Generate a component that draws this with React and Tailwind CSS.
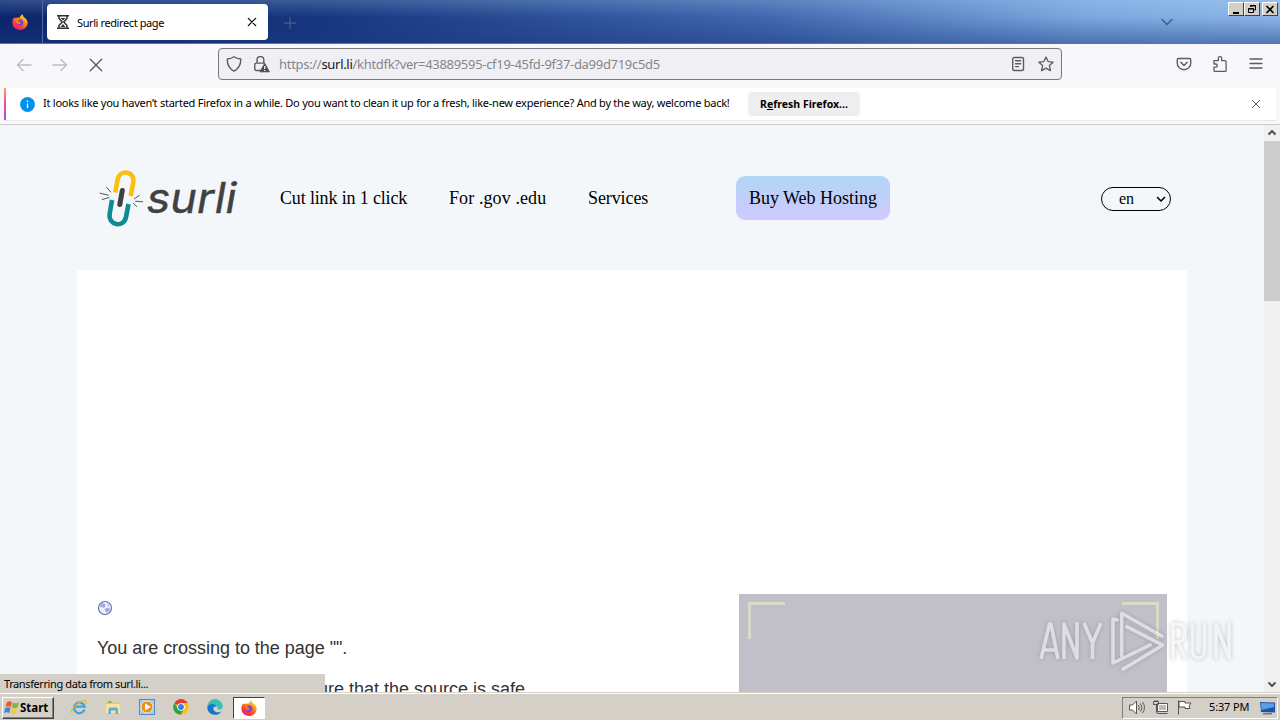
import React from "react";

const ui = "font-['Noto_Sans',sans-serif]";

function Firefox({ size, id }) {
  return (
    <svg width={size} height={size} viewBox="0 0 16 16">
      <defs>
        <linearGradient id={id} x1="0.85" y1="0" x2="0.2" y2="1">
          <stop offset="0" stopColor="#fff04a" />
          <stop offset="0.35" stopColor="#ff980e" />
          <stop offset="0.7" stopColor="#ff3b3f" />
          <stop offset="1" stopColor="#e31587" />
        </linearGradient>
      </defs>
      <path d="M10 .3c1 .8 1.4 1.7 1.5 2.6 2.2 1 4 2.800 4.100 5.800C15.600 12.900 12.300 15.900 8 15.900S.4 12.600.4 8.500c0-2 .7-4 1.800-5.200l.5 1.300c.6-.7 1-1.100 1.700-1.400l.3 1c1-.7 1.900-.7 2.900-.4C8 2.500 9.200 1.800 10 .3z" fill={`url(#${id})`} />
      <circle cx="8" cy="8.600" r="3.400" fill="#7542e5" />
      <path d="M4 5.500c1.500-.6 2.800-.1 4 .7-1.600.1-2.200.8-1.600 1.500.7.6 2 .4 2.600 1.100-1 1.700-3 1.800-4.300.2C3.900 8 3.600 6.700 4 5.500z" fill="#ff7a24" />
    </svg>
  );
}

function Stroke({ size = 16, w = 1.2, className = "", children, box = 16 }) {
  return (
    <svg width={size} height={size} viewBox={`0 0 ${box} ${box}`} fill="none" stroke="currentColor" strokeWidth={w} strokeLinecap="round" strokeLinejoin="round" className={className}>
      {children}
    </svg>
  );
}

function TitleBar() {
  return (
    <div className="relative flex h-[44px] shrink-0 border-b border-[#716f7e] bg-[linear-gradient(to_right,#0a246a,#16367e_25%,#4168ae_60%,#7ba7df_85%,#8ab5e6)]">
      <div className="absolute inset-0 bg-[linear-gradient(to_bottom,rgba(190,225,255,0.22),rgba(70,110,190,0)_40%,rgba(30,55,130,0.48))]" />
      <div className="relative flex w-[43px] items-center justify-center border-r border-[#52689e] pr-0.5">
        <Firefox size={16} id="ffTop" />
      </div>
      <div className="relative ml-1 mt-1 flex h-9 w-[221px] items-center rounded bg-white pl-2 pr-[10px] text-black">
        <svg width="16" height="16" viewBox="0 0 16 16" fill="none" stroke="#333" strokeWidth="1.500">
          <path d="M2 1.800h12M2 14.200h12M4 2v2.500L7.200 8 4 11.500V14M12 2v2.500L8.800 8l3.200 3.500V14" />
          <path d="M5.500 4h5L8 6.500zM5.500 13l2.500-3 2.500 3z" fill="#333" stroke="none" />
        </svg>
        <span className={`${ui} ml-[6px] flex-1 whitespace-nowrap pt-[2px] text-[11px] tracking-[-0.4px]`}>Surli redirect page</span>
        <Stroke size={12} box={12} w={1.200}><path d="M2.300 2.300l7.400 7.400M9.700 2.300L2.300 9.700" /></Stroke>
      </div>
      <Stroke size={12} box={12} w={1} className="relative ml-4 mt-[17px] text-[#53678a]"><path d="M6 .5v11M.5 6h11" /></Stroke>
      <Stroke size={14} box={14} w={1.500} className="relative ml-auto mr-[4px] mt-[15px] text-[#3d5f91]"><path d="M2 4.500l5 5 5-5" /></Stroke>
      <div className="relative ml-[50px] mr-[2px] flex pt-[2px]">
        {["min", "max", "close"].map((k) => (
          <div key={k} className={`flex h-[14px] w-4 items-center justify-center border border-b-[#404040] border-l-white border-r-[#404040] border-t-white bg-[#d4d0c8] ${k === "close" ? "ml-[2px]" : ""}`}>
            <svg width="12" height="11" viewBox="0 0 12 11" fill="none" stroke="#000">
              {k === "min" && <path d="M3 9h6" strokeWidth="2" />}
              {k === "max" && <path d="M4.500 3V1.500h5V6H8M4 2h6M2.500 4.500h5v4h-5zM2 5h6" />}
              {k === "close" && <path d="M2.500 2l7 7M9.500 2l-7 7" strokeWidth="1.700" />}
            </svg>
          </div>
        ))}
      </div>
    </div>
  );
}

function NavBar() {
  return (
    <div className="flex h-[44px] shrink-0 items-start bg-[#f8f8fb] text-[#5b5b66]">
      <div className="flex w-[218px] gap-5 pl-4 pt-[13px]">
        <Stroke className="text-[#bcbcc2]" w={1.400}><path d="M15 8H1.500M7 2.500L1.500 8 7 13.500" /></Stroke>
        <Stroke className="text-[#bcbcc2]" w={1.400}><path d="M1 8h13.500M9 2.500L14.500 8 9 13.500" /></Stroke>
        <Stroke w={1.400}><path d="M2.300 2.300l11.400 11.400M13.700 2.300L2.300 13.700" /></Stroke>
      </div>
      <div className="mt-1 flex h-8 w-[844px] items-center rounded border border-[#76767f] bg-[#f0f0f4] pl-[7px] pr-[7px]">
        <Stroke w={1.400}><path d="M8 .8c2 1.500 4.300 2 6.700 2.200.3 4.800-1.700 9.500-6.700 12.200C3 12.500 1 7.800 1.300 3 3.700 2.800 6 2.300 8 .8z" /></Stroke>
        <svg width="17" height="17" viewBox="0 0 17 17" className="ml-[11px]" fill="none" stroke="#5b5b66" strokeWidth="1.400">
          <path d="M4 7V4a3.300 3.300 0 0 1 6.800 0v3M7.500 14.500H3.300a1.500 1.500 0 0 1-1.500-1.500V8.600A1.500 1.500 0 0 1 3.300 7.100h8.200" strokeLinecap="round" />
          <path d="M11.700 7.500l4.600 8.300H7z" fill="#4b4b55" stroke="#4b4b55" strokeWidth="1" strokeLinejoin="round" />
          <path d="M11.700 10v3M11.700 14v1.100" stroke="#fff" strokeWidth="1.200" />
        </svg>
        <span className={`${ui} ml-[9px] flex-1 whitespace-nowrap pt-[2px] text-[13px] tracking-[-0.3px] text-[#85858d]`}>
          https://<span className="text-[#15141a]">surl.li</span>/khtdfk?ver=43889595-cf19-45fd-9f37-da99d719c5d5
        </span>
        <Stroke w={1.400}><rect x="2.700" y="1.500" width="10.800" height="13" rx="1.500" /><path d="M5.500 4.800h5.200M5.500 7.700h5.200M5.500 10.600h3" /></Stroke>
        <Stroke w={1.300} className="ml-3"><path d="M8 1l2.100 4.600 5 .6-3.700 3.400 1 5L8 12.100l-4.400 2.500 1-5L.9 6.200l5-.6z" /></Stroke>
      </div>
      <div className="flex flex-1 items-center justify-end gap-5 pr-4 pt-3">
        <Stroke w={1.400}><path d="M2.500 2.500h11a1.200 1.200 0 0 1 1.200 1.200v3.500a6.700 6.500 0 0 1-13.400 0V3.700a1.200 1.200 0 0 1 1.200-1.200zM4.800 6.300L8 9.400l3.200-3.100" /></Stroke>
        <Stroke w={1.300}><path d="M2 6.500V4.700h4.300V2.400a1.700 1.700 0 0 1 3.400 0v2.300h3.100a1.300 1.300 0 0 1 1.300 1.300v8.200a1.300 1.300 0 0 1-1.300 1.300H3.200A1.300 1.300 0 0 1 2 14.200v-3h1.700a1.600 1.600 0 0 0 0-3.200H2z" /></Stroke>
        <Stroke w={1.300}><path d="M2 3h12M2 7.500h12M2 12h12" /></Stroke>
      </div>
    </div>
  );
}

function Notification() {
  return (
    <div className="h-[37px] shrink-0 border-b border-[#cccccf] bg-[#f8f8fb] pl-1 pr-1">
      <div className="flex h-[33px] items-center border-b border-[#e7e7ea] bg-white pr-[14px]">
        <div className="h-8 w-[2px] bg-[linear-gradient(#ff9a5a,#f04fa5_45%,#9059d8)]" />
        <svg width="15" height="15" viewBox="0 0 15 15" className="ml-[14px]">
          <circle cx="7.500" cy="7.500" r="7.400" fill="#0090ed" />
          <path d="M7.500 6.500V11M7.500 3.500V5" stroke="#fff" strokeWidth="1.300" />
        </svg>
        <span className={`${ui} ml-2 w-[705px] whitespace-nowrap pb-[1px] text-[11px] tracking-[-0.25px] text-black`}>
          It looks like you haven’t started Firefox in a while. Do you want to clean it up for a fresh, like-new experience? And by the way, welcome back!
        </span>
        <div className={`${ui} flex h-6 w-28 shrink-0 items-center justify-center whitespace-nowrap rounded bg-[#eeeeef] pt-[1px] text-[10.500px] font-bold text-black`}>
          <span>R<span className="underline">e</span>fresh Firefox...</span>
        </div>
        <Stroke size={12} box={12} w={1} className="ml-auto text-[#5b5b66]"><path d="M2.300 2.300l7.400 7.400M9.700 2.300L2.300 9.700" /></Stroke>
      </div>
    </div>
  );
}

function Logo() {
  return (
    <svg width="140" height="60" viewBox="0 0 140 60" fill="none" strokeLinecap="round">
      <path d="M16.300 24.500l2.200-12.500c2-11.500 17.500-9 15.800 2l-2.600 14" stroke="#fcbf10" strokeWidth="4.600" strokeLinecap="butt" />
      <path d="M13 32l-2.300 13.500c-1.700 12.500 14.300 14.500 16.300 3.500l2.500-13" stroke="#0d8b94" strokeWidth="4.600" strokeLinecap="butt" />
      <path d="M23.300 22.500l-2.500 14" stroke="#414042" strokeWidth="5" />
      <path d="M7.700 19.500l4 4.500M1 25.200l8.300 2M3.300 31.500l6.700-2M35.300 30.800l5-3.300M36.700 33.200l7 .6M34.300 35.200l3.400 3.300" stroke="#414042" strokeWidth="0.900" />
      <text x="47.500" y="45" textLength="90" lengthAdjust="spacingAndGlyphs" fontFamily="Inter, sans-serif" fontSize="42" fontStyle="italic" fill="#414042" stroke="#414042" strokeWidth="0.400">surli</text>
    </svg>
  );
}

function Watermark() {
  return (
    <div className="absolute left-[1039px] top-[604px] opacity-60 drop-shadow-[0_0_2px_rgba(70,70,80,0.500)]">
      <svg width="200" height="74" viewBox="0 0 200 74" fill="none" stroke="#f2f2f4" strokeWidth="3.600" strokeLinejoin="round">
        <path d="M2 55L10.500 20h1.500l7 35M5 46h12M25 55V20l13 34V18M45 19l8.500 20L62 19M53.500 38v17" />
        <path d="M78 16l-4-1v44l37-18M82.700 52V9.300L122.700 32M87.700 22.700l36 18.500L84.300 65" strokeLinecap="round" />
        <path d="M134 55V20h5q7 0 7 9t-7 9h-5M139 38l7.500 17M153.500 19v27q0 8 6 8t6-8V19M177 55V20l13 34V18" />
      </svg>
    </div>
  );
}

function Page() {
  return (
    <div className="flex min-h-0 flex-1 bg-[#f3f7fa]">
      <div className="min-w-0 flex-1 overflow-hidden px-[77px]">
        <header className="flex h-[145px] items-center font-['Liberation_Serif',serif] text-[18px] text-black">
          <div className="ml-[22px] w-[181px]"><Logo /></div>
          <nav className="flex w-[456px] whitespace-nowrap pt-[2px]">
            <span className="w-[169px] tracking-[-0.15px]">Cut link in 1 click</span>
            <span className="w-[139px] tracking-[0.1px]">For .gov .edu</span>
            <span className="tracking-[-0.1px]">Services</span>
          </nav>
          <div className="flex h-[44px] w-[154px] items-center justify-center whitespace-nowrap rounded-[9px] bg-[linear-gradient(#b0d6f5,#d0c8ff)] pt-[1px] text-[18px]">Buy Web Hosting</div>
          <div className="ml-auto mr-4 mt-[3px] flex h-6 w-[70px] items-center justify-between rounded-full border border-black pl-[17px] pr-[4px] text-[16px]">
            en
            <Stroke size={10} box={10} w={1.600}><path d="M1.500 3.500L5 7l3.500-3.500" /></Stroke>
          </div>
        </header>
        <main className="flex h-[422px] w-[1110px] justify-between overflow-hidden bg-white pl-5 pr-5 font-['Liberation_Sans',sans-serif] text-[18px] leading-[20px] text-[#333]">
          <div className="w-[500px] whitespace-nowrap pt-[330px]">
            <svg width="16" height="16" viewBox="0 0 16 16">
              <circle cx="8" cy="8" r="6.500" fill="#eef2ff" stroke="#646ca5" strokeWidth="1.100" />
              <path d="M3 4.500L6 3l2.500 1.500L8 7 6.500 8 5 7 3.500 7.500zM7.500 9l3-1.500 2.500 1-.5 2.500-3 2-1-2zM10 3.500l2.500 1.500-1 1.500z" fill="#a3aed8" />
            </svg>
            <p className="mt-[22px] tracking-[-0.03px]">You are crossing to the page "".</p>
            <p className="mt-[21px] pl-[221px]">ure that the source is safe</p>
          </div>
          <div className="mt-[324px] flex w-[428px] justify-between bg-[#c1bfc8] pl-[9px] pr-2 pt-2">
            <div className="h-[37px] w-[37px] border-l-[3px] border-t-[3px] border-[#dadbc9]" />
            <div className="h-[37px] w-[37px] border-r-[3px] border-t-[3px] border-[#dadbc9]" />
          </div>
        </main>
      </div>
      <div className="flex w-4 flex-col items-center bg-[#f0f0f0] text-[#505050]">
        <Stroke size={16} w={2} className="shrink-0"><path d="M4.500 9.500L8 6l3.500 3.500" strokeLinecap="butt" /></Stroke>
        <div className="h-[160px] w-4 bg-[#cdcdcd]" />
        <Stroke size={16} w={2} className="mt-auto"><path d="M4.500 6.500L8 10l3.500-3.500" strokeLinecap="butt" /></Stroke>
      </div>
    </div>
  );
}

function Taskbar() {
  return (
    <div className={`${ui} flex h-7 shrink-0 items-center border-t border-[#d4d0c8] bg-[#d4d0c8] text-[11px] text-black shadow-[inset_0_1px_0_#fff]`}>
      <div className="ml-[2px] mt-[2px] flex h-[22px] w-[52px] items-center border border-b-[#404040] border-l-white border-r-[#404040] border-t-white pl-[1px] shadow-[inset_-1px_-1px_0_#808080]">
        <svg width="16" height="16" viewBox="0 0 16 16">
          <path d="M3 2q3-1.500 5 0L7 7Q4.500 5.500 1.500 7z" fill="#f1592a" />
          <path d="M9 2.500q3 1.500 6 0L13.500 7.500q-3 1.500-5.500 0z" fill="#7cb841" />
          <path d="M1.300 8q3-1.500 5.300 0l-1.300 5Q3 11.500 0 13z" fill="#3d87d6" />
          <path d="M7.800 8.500q3 1.500 5.500 0L12 13.500q-3 1.500-5.500 0z" fill="#fbc534" />
        </svg>
        <span className="text-[11.500px] font-bold">Start</span>
      </div>
      <div className="ml-[17px] mt-[1px] flex items-center gap-[18px]">
        <svg width="16" height="16" viewBox="0 0 16 16" fill="none">
          <path d="M13.500 10.500A5.300 5.300 0 1 1 13.600 7.600H4" stroke="#38a8e5" strokeWidth="2.400" />
          <path d="M1 14C-2 10 12-1 15 2c.5.600.4 1.500 0 2.500" stroke="#e6b832" strokeWidth="1.200" />
        </svg>
        <svg width="16" height="16" viewBox="0 0 16 16">
          <path d="M1 2h5l1.500 1.500H14V13H1z" fill="#eac85e" />
          <path d="M1 5h14v9H1z" fill="#f7e498" />
          <path d="M3.500 15v-4.500q0-2 2-2h5.500q2 0 2 2V15h-2.500v-3.500H6V15z" fill="#5aaee0" />
          <path d="M3.500 2h3v2h-3z" fill="#79b84c" />
        </svg>
        <svg width="16" height="16" viewBox="0 0 16 16">
          <rect x=".5" y=".5" width="15" height="15" fill="#a4cdec" stroke="#4e90c5" />
          <circle cx="8" cy="8" r="6" fill="#f28c18" stroke="#fff" strokeWidth=".7" />
          <path d="M6 4.500v7L12 8z" fill="#fff" />
        </svg>
        <svg width="16" height="16" viewBox="0 0 16 16">
          <circle cx="8" cy="8" r="7.800" fill="#fbc116" />
          <path d="M8 8L1.300 4A7.800 7.800 0 0 1 14.800 4H8z" fill="#e53b2e" />
          <path d="M1.300 4A7.800 7.800 0 0 0 7.600 15.800L11 10 8 8 5 9.500z" fill="#2ba24c" />
          <circle cx="8" cy="8" r="3.800" fill="#fff" /><circle cx="8" cy="8" r="2.900" fill="#397fe8" />
        </svg>
        <svg width="16" height="16" viewBox="0 0 16 16">
          <path d="M.3 8A7.700 7.700 0 0 1 15.700 7.500c0 3-3 3.500-5 2.800-.8-.3-.5-1 0-1.800C10 5 4 4 .3 8z" fill="#35c1b5" />
          <path d="M.3 8C2 4 9 4 10 8 6 6 4.500 11 9 13c2 .8 4 .3 5.500-.8C11.500 18 .3 17 .3 8z" fill="#1474cf" />
        </svg>
      </div>
      <div className="ml-[10px] mt-[2px] flex h-[22px] w-[32px] items-center justify-center border border-b-white border-l-[#404040] border-r-white border-t-[#404040] bg-white"><Firefox size={16} id="ffTask" /></div>
      <div className="ml-auto mr-[2px] mt-[2px] flex h-[22px] w-[156px] items-center border border-b-white border-l-[#808080] border-r-white border-t-[#808080] pl-[5px] pr-[1px]">
        <svg width="66" height="17" viewBox="0 0 66 17" fill="none" stroke="#555" strokeWidth="1">
          <path d="M1.500 6h3l4-4v13l-4-4h-3z" fill="#fff" />
          <path d="M10.500 6q1.500 2.500 0 5M12.500 4.500q3 4 0 8M14.500 3q4 5.500 0 11" />
          <path d="M29.500 4.500h10v8h-10z" fill="#fff" /><path d="M31 6h7v5h-7z" fill="#bbb" stroke="none" /><path d="M25.500 2.500h5v3h-5zM27 1v2M29 1v2M28.500 6v7q0 1.500 2 1.500h9" />
          <path d="M50.500 1.500v14M51 2.500h6v1.500h6l-2 3 1 2.500h-5V8h-6z" fill="#fff" />
        </svg>
        <span className="ml-[15px] flex-1 whitespace-nowrap tracking-[-0.15px]">5:37 PM</span>
        <svg width="16" height="14" viewBox="0 0 16 14">
          <path d="M0 1l15 .5v10L1 11z" fill="#1a55ad" /><path d="M1 2l13 .5V6L1.500 9z" fill="#5a9fe2" /><path d="M3 12h9v1.500H3z" fill="#777" />
        </svg>
      </div>
    </div>
  );
}

export default function App() {
  return (
    <div className="relative flex h-[720px] w-[1280px] flex-col overflow-hidden">
      <TitleBar />
      <NavBar />
      <Notification />
      <Page />
      <Taskbar />
      <div className={`${ui} absolute bottom-7 left-0 flex h-[18px] w-[325px] items-center bg-[#d4d0c8] pl-1 pt-[2px] text-[11px] tracking-[-0.4px] text-black`}>Transferring data from surl.li...</div>
      <Watermark />
    </div>
  );
}
